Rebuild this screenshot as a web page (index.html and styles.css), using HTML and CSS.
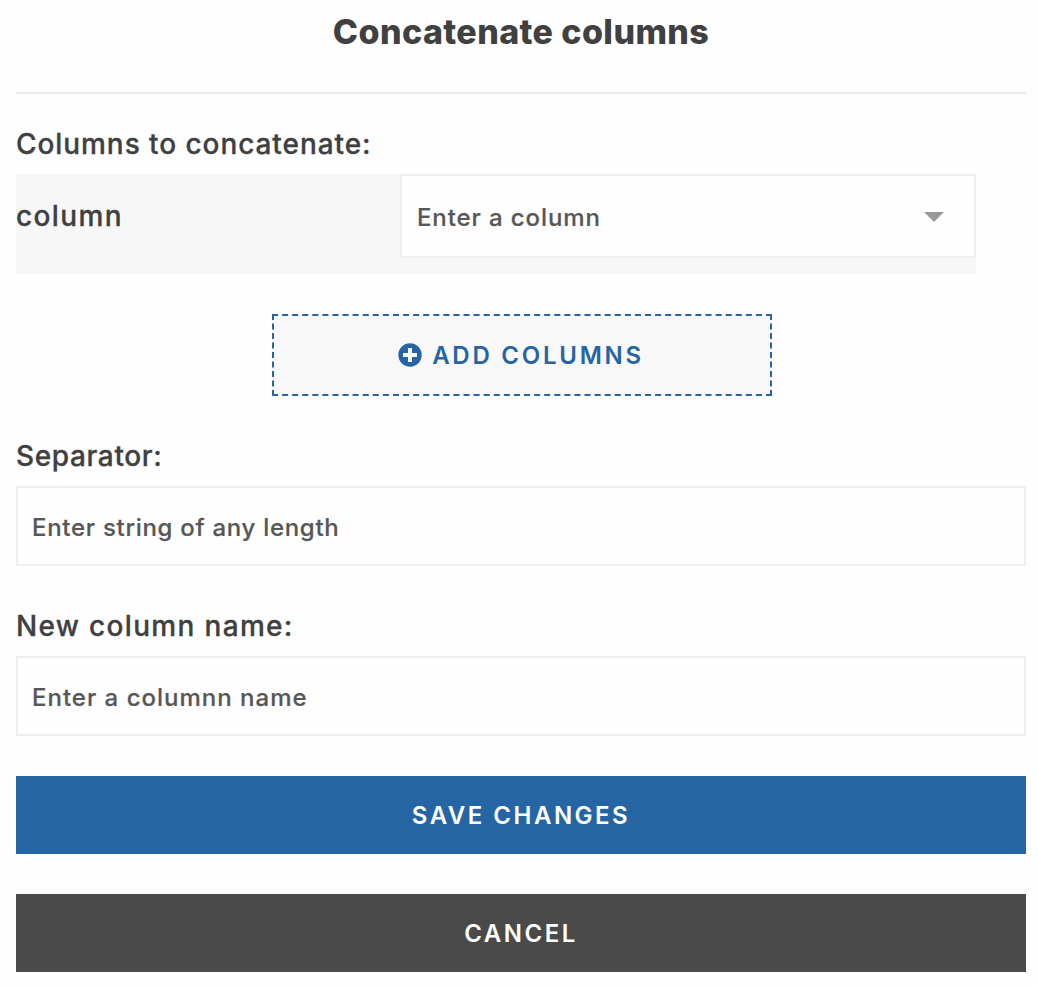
FILE: index.html
```html
<!DOCTYPE html>
<html lang="en">
<head>
<meta charset="utf-8">
<title>Concatenate columns</title>
<link rel="stylesheet" href="styles.css">
</head>
<body>
<form class="editor">
  <h1 class="title"><span class="title-text">Concatenate columns</span></h1>

  <section class="columns">
    <div class="label"><span class="columns-label">Columns to concatenate:</span></div>
    <div class="column-row">
      <div class="label column-name"><span>column</span></div>
      <div class="select">
        <span class="select-text">Enter a column</span>
        <span class="caret"></span>
      </div>
    </div>
    <button type="button" class="add">
      <svg class="add-icon" viewBox="0 0 24 24" aria-hidden="true">
        <circle cx="12" cy="12" r="11.7" fill="#2665a3"/>
        <path d="M12 5v14M5 12h14" stroke="#f8f8f8" stroke-width="4"/>
      </svg>
      <span class="add-text">ADD COLUMNS</span>
    </button>
  </section>

  <section class="field">
    <label class="label" for="separator"><span class="separator-label">Separator:</span></label>
    <input class="input input-separator" id="separator" placeholder="Enter string of any length">
  </section>

  <section class="field">
    <label class="label" for="name"><span class="name-label">New column name:</span></label>
    <input class="input input-name" id="name" placeholder="Enter a columnn name">
  </section>

  <button type="button" class="button save"><span>SAVE CHANGES</span></button>
  <button type="button" class="button cancel"><span>CANCEL</span></button>
</form>
</body>
</html>
```

FILE: styles.css
```css
* { box-sizing: border-box; }

body {
  margin: 0;
  background: #fefefe;
  color: #404040;
  font-family: Inter, "Open Sans", sans-serif;
}

.editor {
  display: flex;
  flex-direction: column;
  padding: 0 12px 0 16px;
}

.title {
  display: flex;
  justify-content: center;
  height: 94px;
  margin: 0;
  padding-top: 10px;
  border-bottom: 2px solid #ebebeb;
  font-size: 34px;
  line-height: 44px;
  font-weight: 800;
  letter-spacing: 0.4px;
  white-space: nowrap;
}

.columns {
  display: flex;
  flex-direction: column;
  padding-top: 30px;
}

.label {
  height: 50px;
  font-size: 28px;
  line-height: 40px;
  font-weight: 500;
  -webkit-text-stroke: 0.3px;
  white-space: nowrap;
}

.columns-label { letter-spacing: 0.93px; }
.separator-label { letter-spacing: 0.63px; }
.name-label { letter-spacing: 1.32px; }

.column-row {
  display: grid;
  grid-template-columns: 384px 576px;
  width: 960px;
  height: 100px;
  background: #f7f7f7;
}

.column-name {
  padding-top: 22px;
  letter-spacing: 1.4px;
}

.select {
  display: flex;
  align-items: center;
  justify-content: space-between;
  height: 84px;
  padding: 2px 30px 0 15px;
  border: 2px solid #efefef;
  background: #fefefe;
  color: #575757;
  font-size: 24px;
  font-weight: 500;
  -webkit-text-stroke: 0.2px;
  letter-spacing: 0.9px;
}

.caret {
  border: 10px solid transparent;
  border-top-color: #999;
  border-bottom: 0;
}

.add {
  display: flex;
  align-items: center;
  justify-content: center;
  align-self: center;
  gap: 10px;
  width: 500px;
  height: 82px;
  margin: 40px 0 0 2px;
  padding: 0 8px 0 6px;
  border: 2px dashed #2665a3;
  background: #f8f8f8;
  color: #2665a3;
  font: 600 24px Inter, sans-serif;
  letter-spacing: 2.75px;
}

.add-icon { width: 24px; height: 24px; }

.field {
  display: flex;
  flex-direction: column;
  padding-top: 40px;
}

.input {
  width: 100%;
  height: 80px;
  padding: 2px 14px 0;
  border: 2px solid #efefef;
  background: #fefefe;
  font: 500 24px Inter, sans-serif;
  -webkit-text-stroke: 0.2px;
}

.input-separator { letter-spacing: 0.71px; }
.input-name { letter-spacing: 1px; }

.input::placeholder { color: #575757; opacity: 1; }

.button {
  height: 78px;
  margin-top: 40px;
  padding: 0;
  border: 0;
  color: #fff;
  font: 600 24px Inter, sans-serif;
  letter-spacing: 2.5px;
}

.save { background: #2665a3; }
.cancel { background: #4a4a4a; }
```
